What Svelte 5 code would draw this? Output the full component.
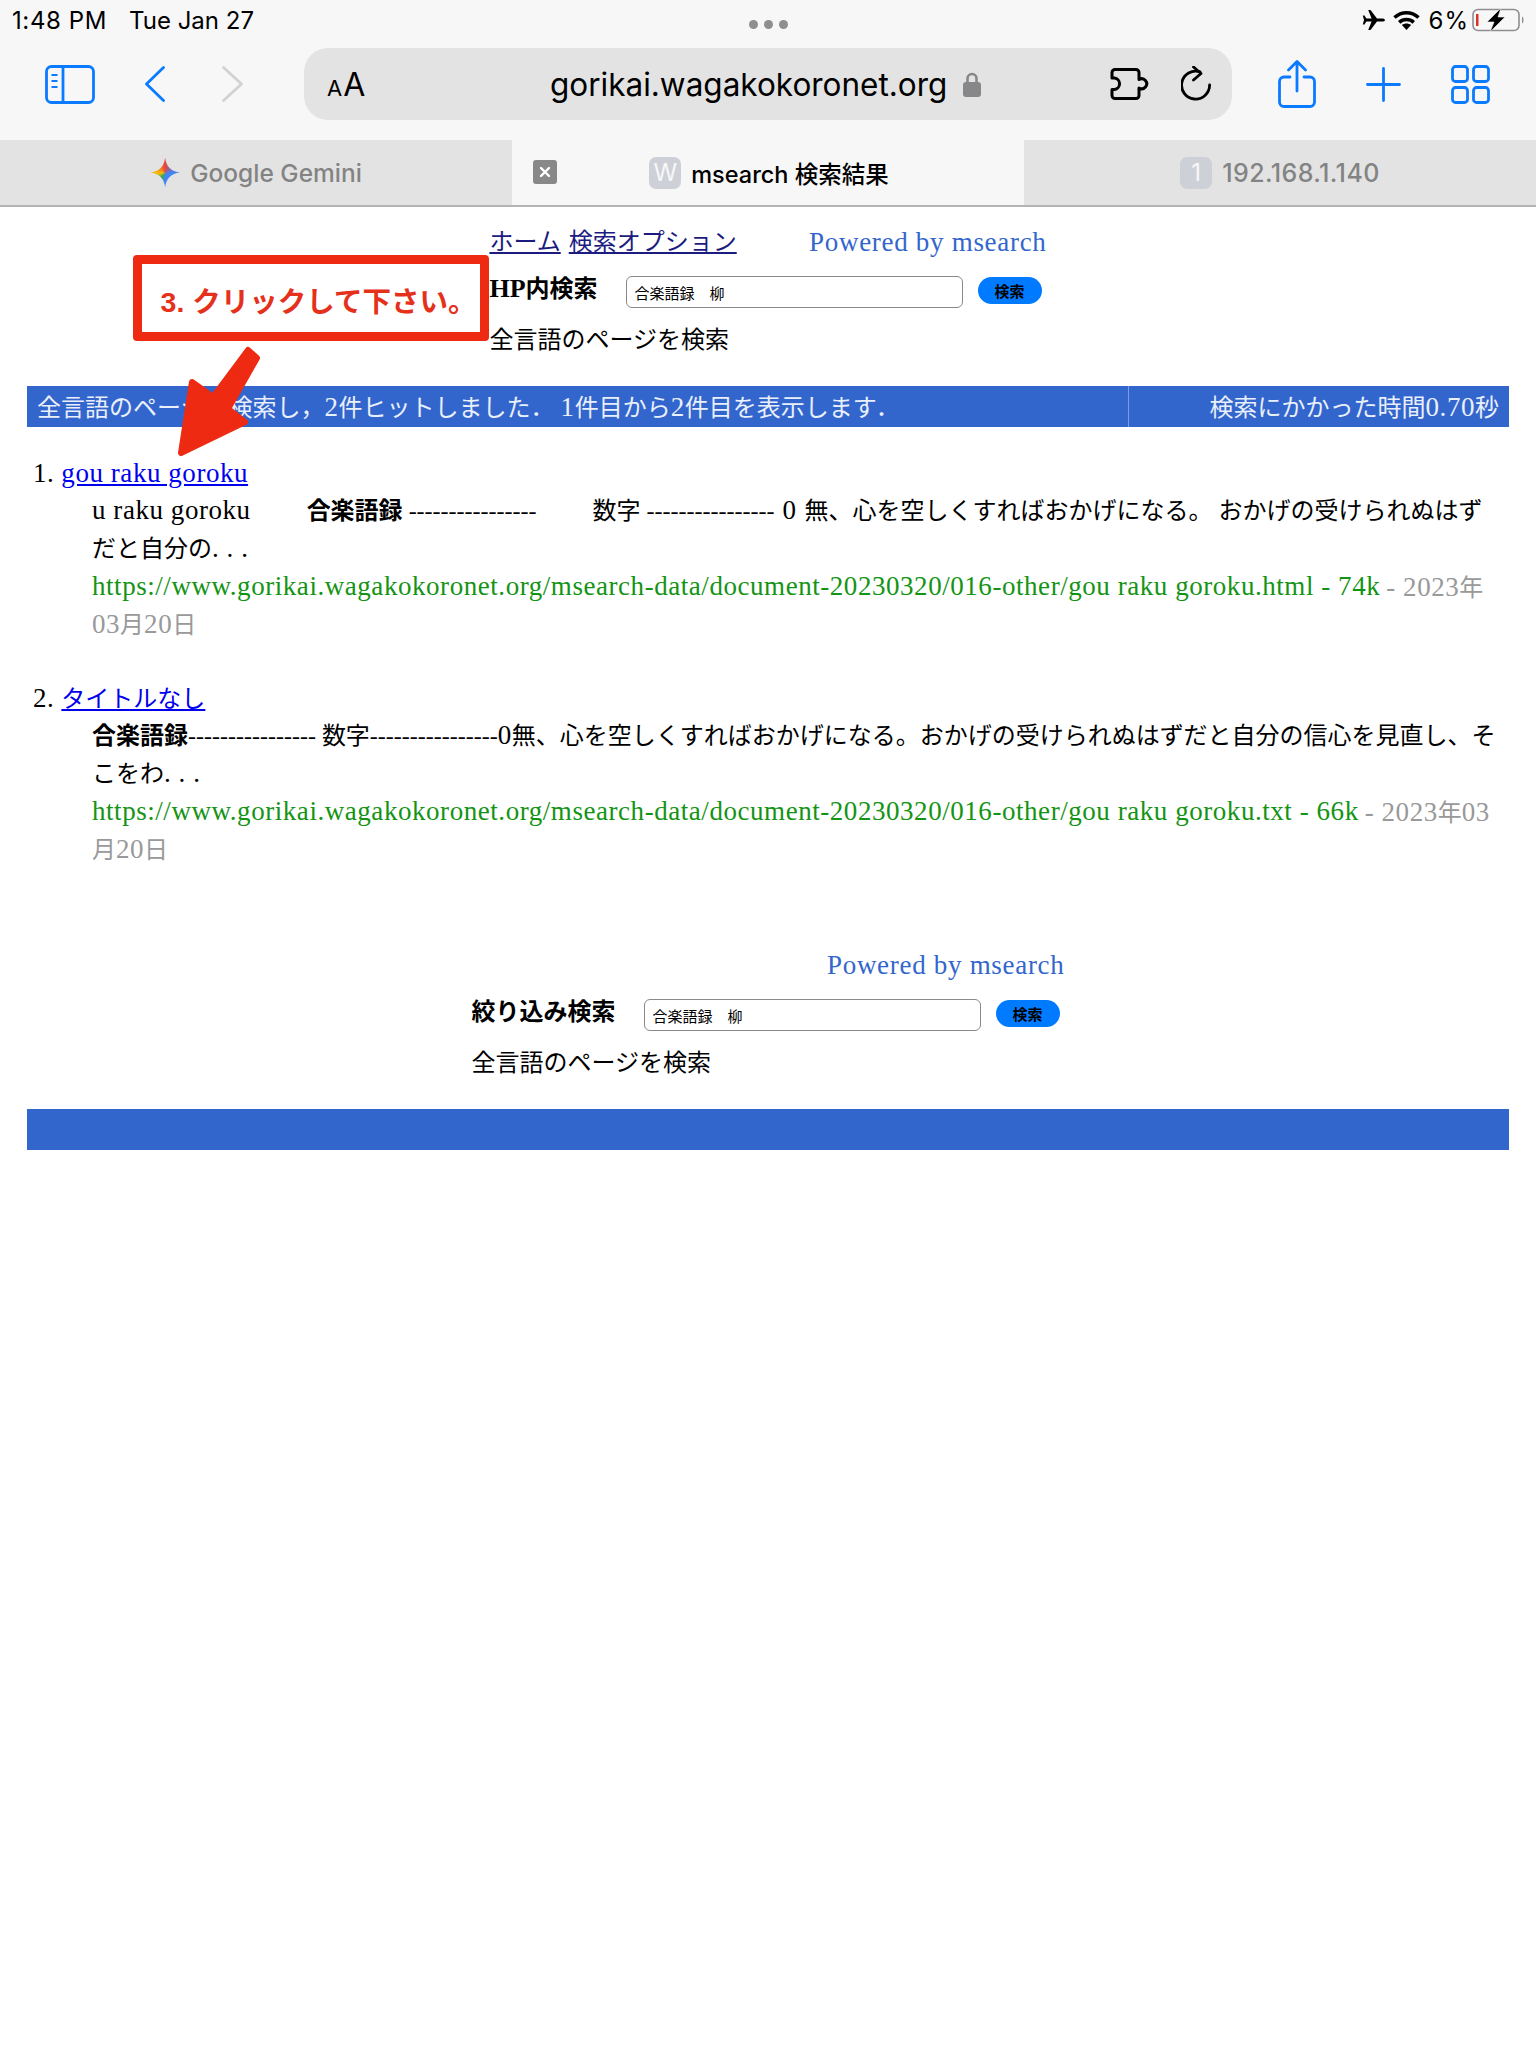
<script>
	const query = '合楽語録　柳';
</script>

{#snippet searchForm(label, homeLinks)}
	<form class="search">
		<div class="searchTop" class:right={!homeLinks}>
			{#if homeLinks}
				<span class="navLinks"><a href="#home">ホーム</a> <a href="#opt">検索オプション</a></span>
			{/if}
			<span class="powered">Powered by msearch</span>
		</div>
		<div class="searchRow">
			<b>{@html label}</b>
			<input type="text" value={query} />
			<button type="button">検索</button>
		</div>
		<div class="scope">全言語のページを検索</div>
	</form>
{/snippet}

<div class="chrome">
	<div class="status">
		<div class="statusLeft"><span class="time">1:48 PM</span><span>Tue Jan 27</span></div>
		<div class="dots"><i></i><i></i><i></i></div>
		<div class="statusRight">
			<svg width="23" height="20" viewBox="0 0 23 20"><path fill="#000" d="M23 10c0-1-1.5-1.6-3-1.6h-5L8.5 0H6.2l3.4 8.4H4.4L2.4 5.6H.8L2 10 .8 14.4h1.6l2-2.8h5.2L6.2 20h2.300l6.500-8.400h5c1.500 0 3-.6 3-1.600z"/></svg>
			<svg width="27" height="20" viewBox="0 0 27 20" fill="none" stroke="#000" stroke-width="3.600"><path d="M1.500 7.500c7-6.400 17-6.400 24 0"/><path d="M6.200 12.300c4.300-3.800 10.300-3.800 14.600 0"/><path fill="#000" stroke="none" d="M13.500 20l-4.600-5c2.700-2 6.500-2 9.200 0z"/></svg>
			<span class="pct">6%</span>
			<svg width="53" height="24" viewBox="0 0 53 24">
				<rect x="1" y="1.500" width="46" height="21" rx="5" fill="none" stroke="#8e8e8e" stroke-width="1.600"/>
				<rect x="4" y="6" width="2.500" height="12" fill="#d9342b"/>
				<path d="M50 8.500c2 .5 2 6.500 0 7z" fill="#8e8e8e"/>
				<path d="M29 0L15 14h7l-4 10 15-15h-7z" fill="#000" stroke="#f7f7f7" stroke-width=".6"/>
			</svg>
		</div>
	</div>

	<div class="toolbar">
		<svg class="blue" width="50" height="39" viewBox="0 0 50 39" fill="none" stroke="#0a7aff" stroke-width="2.800">
			<rect x="1.500" y="1.500" width="47" height="36" rx="5"/>
			<path d="M18 1.500v36"/>
			<path d="M6.500 10h6M6.500 16h6M6.500 22h6" stroke-width="2.200"/>
		</svg>
		<svg class="back" width="20" height="36" viewBox="0 0 20 36" fill="none" stroke="#0a7aff" stroke-width="2.800" stroke-linecap="round" stroke-linejoin="round"><path d="M18.500 1.500L1.500 18l17 16.500"/></svg>
		<svg class="fwd" width="21" height="36" viewBox="0 0 21 36" fill="none" stroke="#d2d2d4" stroke-width="2.800" stroke-linecap="round" stroke-linejoin="round"><path d="M1.500 1.500L19.500 18l-18 16.500"/></svg>

		<div class="pill">
			<span class="aa"><small>A</small>A</span>
			<span class="url">gorikai.wagakokoronet.org</span>
			<svg class="lock" width="18" height="25" viewBox="0 0 18 25"><path fill="none" stroke="#87878a" stroke-width="2.600" d="M4.500 11V6.500a4.500 4.500 0 0 1 9 0V11"/><rect y="10" width="18" height="15" rx="3" fill="#87878a"/></svg>
			<svg class="puzzle" width="42" height="32" viewBox="0 0 42 32" fill="none" stroke="#000" stroke-width="3" stroke-linejoin="round">
				<path d="M5 1.500h21a3 3 0 0 1 3 3V11.500a5 5 0 1 1 0 8.500V27.500a3 3 0 0 1-3 3H5a3 3 0 0 1-3-3V21.500h2.500a5.800 5.800 0 0 0 0-11.500H2V4.500a3 3 0 0 1 3-3z"/>
			</svg>
			<svg class="reload" width="30" height="36" viewBox="0 0 30 36" fill="none" stroke="#000" stroke-width="2.800" stroke-linecap="round" stroke-linejoin="round">
				<path d="M19 5.800A14 14 0 1 0 28.600 19"/>
				<path d="M12.500 1l7.500 6.500-7.500 6.500"/>
			</svg>
		</div>

		<svg class="share" width="38" height="48" viewBox="0 0 38 48" fill="none" stroke="#0a7aff" stroke-width="2.800" stroke-linecap="round" stroke-linejoin="round">
			<path d="M12 17H6a4.500 4.500 0 0 0-4.500 4.500V42A4.500 4.500 0 0 0 6 46.500h26a4.500 4.500 0 0 0 4.500-4.500V21.500A4.500 4.500 0 0 0 32 17h-6"/>
			<path d="M19 31V2M10.500 10L19 1.500 27.500 10"/>
		</svg>
		<svg class="plus" width="35" height="35" viewBox="0 0 35 35" fill="none" stroke="#0a7aff" stroke-width="2.800" stroke-linecap="round"><path d="M17.500 1.500v32M1.500 17.500h32"/></svg>
		<svg class="grid" width="39" height="39" viewBox="0 0 39 39" fill="none" stroke="#0a7aff" stroke-width="2.800">
			<rect x="1.500" y="1.500" width="15" height="15" rx="3"/><rect x="22.500" y="1.500" width="15" height="15" rx="3"/>
			<rect x="1.500" y="22.500" width="15" height="15" rx="3"/><rect x="22.500" y="22.500" width="15" height="15" rx="3"/>
		</svg>
	</div>

	<div class="tabs">
		<div class="tab"><span class="gem"></span>Google Gemini</div>
		<div class="tab active">
			<span class="close">
				<svg width="14" height="14" viewBox="0 0 14 14" stroke="#fff" stroke-width="2.400" stroke-linecap="round"><path d="M3 3l8 8M11 3l-8 8"/></svg>
			</span>
			<span class="fav">W</span>msearch 検索結果
		</div>
		<div class="tab ip"><span class="fav">1</span>192.168.1.140</div>
	</div>
</div>

<div class="page">
	{@render searchForm('<span class="hp">HP</span>内検索', true)}

	<div class="bar">
		<div class="barMain">全言語のページを検索し，<span class="lat">2</span>件ヒットしました． <span class="lat">1</span>件目から<span class="lat">2</span>件目を表示します．</div>
		<div class="barTime">検索にかかった時間<span class="lat">0.70</span>秒</div>
	</div>

	<dl class="results">
		<dt><span class="lat">1.</span> <a href="#r1" class="lat">gou raku goroku</a></dt>
		<dd>
			<span class="line"><span class="lat gapR">u raku goroku</span>　　<b>合楽語録</b> ---------------- <span class="gapL">　　数字</span> ---------------- <span class="lat gapL">0</span> <span class="gapL">無、心を空しくすればおかげになる。 おかげの受けられぬはず</span></span>
			<span class="line">だと自分の<span class="lat">. . .</span></span>
			<span class="line"><span class="url2 lat">https://www.gorikai.wagakokoronet.org/msearch-data/document-20230320/016-other/gou raku goroku.html - 74k</span> <span class="date"><span class="lat">- 2023</span>年</span></span>
			<span class="line date"><span class="lat">03</span>月<span class="lat">20</span>日</span>
		</dd>
		<dt><span class="lat">2.</span> <a href="#r2">タイトルなし</a></dt>
		<dd>
			<span class="line"><b>合楽語録</b>---------------- 数字----------------<span class="lat">0</span>無、心を空しくすればおかげになる。おかげの受けられぬはずだと自分の信心を見直し、そ</span>
			<span class="line">こをわ<span class="lat">. . .</span></span>
			<span class="line"><span class="url2 lat">https://www.gorikai.wagakokoronet.org/msearch-data/document-20230320/016-other/gou raku goroku.txt - 66k</span> <span class="date"><span class="lat">- 2023</span>年<span class="lat">03</span></span></span>
			<span class="line date">月<span class="lat">20</span>日</span>
		</dd>
	</dl>

	{@render searchForm('絞り込み検索', false)}

	<div class="bar footBar"></div>
</div>

<div class="note">3. クリックして下さい。</div>
<svg class="arrow" width="100" height="125" viewBox="170 340 100 125">
	<path fill="#ee2a12" stroke="#ee2a12" stroke-width="6" stroke-linejoin="round" d="M248 350L257 358 228 409 245 422 181 453 192 382 213 397z"/>
</svg>

<style>
	:global(body) {
		background: #fff;
		font-family: "Liberation Serif", "Noto Sans CJK JP", serif;
		font-size: 24px;
		color: #000;
	}
	:global(.lat) {
		font-size: 27px;
		letter-spacing: .55px;
	}
	:global(.hp) {
		font-size: 26px;
	}
	.chrome {
		background: #f7f7f7;
		font-family: Inter, "Noto Sans CJK JP", sans-serif;
	}
	.status {
		height: 48px;
		display: grid;
		grid-template-columns: 1fr auto 1fr;
		padding: 0 11px 0 12px;
		font-size: 24px;
	}
	.statusLeft {
		display: flex;
		gap: 22px;
		height: 40px;
		align-items: center;
	}
	.time {
		letter-spacing: .6px;
	}
	.dots {
		display: flex;
		gap: 6px;
		padding-top: 20px;
	}
	.dots i {
		width: 9px;
		height: 9px;
		border-radius: 50%;
		background: #8e8e8e;
	}
	.statusRight {
		display: flex;
		justify-content: flex-end;
		align-items: center;
		gap: 8px;
		height: 40px;
	}
	.pct {
		font-size: 24px;
		letter-spacing: 1px;
		margin-left: 1px;
	}
	.statusRight svg:last-child {
		margin-left: -5px;
	}
	.toolbar {
		display: flex;
		align-items: center;
		height: 72px;
		padding-left: 45px;
		margin-bottom: 20px;
	}
	.back { margin-left: 50px; }
	.fwd { margin-left: 57px; }
	.pill {
		width: 928px;
		height: 72px;
		margin-left: 61px;
		background: #e3e3e3;
		border-radius: 24px;
		display: flex;
		align-items: center;
		padding-left: 23px;
		box-sizing: border-box;
	}
	.aa {
		font-size: 32px;
		width: 223px;
	}
	.aa small {
		font-size: 22px;
		margin-right: 1px;
	}
	.url {
		font-size: 31.5px;
		white-space: nowrap;
		width: 413px;
	}
	.puzzle { margin-left: 129px; }
	.reload { margin-left: 29px; }
	.share { margin-left: 46px; }
	.plus { margin-left: 50px; }
	.grid { margin-left: 50px; }

	.tabs {
		display: grid;
		grid-template-columns: repeat(3, 512px);
		height: 67px;
		border-bottom: 2px solid #b4b4b4;
		box-sizing: border-box;
	}
	.tab {
		position: relative;
		display: flex;
		align-items: center;
		justify-content: center;
		background: #e3e3e3;
		color: #838383;
		font-size: 24.5px;
		font-weight: 500;
		gap: 10px;
	}
	.tab.active {
		background: #f7f7f7;
		color: #000;
		font-size: 23.5px;
		padding-left: 2px;
	}
	.tab.ip {
		font-size: 25px;
		letter-spacing: .4px;
	}
	.gem {
		width: 30px;
		height: 30px;
		background: conic-gradient(#e8453c, #4285f4 25%, #4285f4 50%, #34a853 60%, #fbbc05 75%, #e8453c);
		clip-path: path("M15 0C16 9 21 14 30 15C21 16 16 21 15 30C14 21 9 16 0 15C9 14 14 9 15 0z");
	}
	.fav {
		width: 32px;
		height: 32px;
		border-radius: 7px;
		background: #ced0d8;
		color: #f7f7f7;
		font-weight: 400;
		font-size: 24px;
		display: flex;
		align-items: center;
		justify-content: center;
	}
	.close {
		position: absolute;
		left: 21px;
		top: 20px;
		width: 24px;
		height: 24px;
		border-radius: 3px;
		background: #888;
		display: flex;
		align-items: center;
		justify-content: center;
	}

	.page {
		padding: 16px 27px 0;
	}
	.search {
		width: fit-content;
		margin: 0 auto;
	}
	.searchTop {
		height: 38px;
		line-height: 38px;
		display: flex;
		justify-content: space-between;
		white-space: nowrap;
	}
	.searchTop.right {
		justify-content: flex-end;
	}
	.navLinks a {
		color: #1c1c80;
	}
	.navLinks a + a {
		margin-left: 2px;
	}
	.powered {
		color: #3366cc;
		font-size: 27px;
		letter-spacing: .7px;
	}
	.searchRow {
		display: flex;
		align-items: center;
		height: 38px;
		margin-top: 9px;
		margin-right: 5px;
	}
	.searchRow b {
		margin-right: 28px;
		margin-top: -5px;
	}
	.searchRow input {
		width: 337px;
		height: 32px;
		box-sizing: border-box;
		border: 1.5px solid #8a8a8a;
		border-radius: 6px;
		padding: 0 8px;
		font: 15px "Noto Sans CJK JP", sans-serif;
		color: #000;
		background: #fff;
		margin: 6px 15px 0 0;
	}
	.searchRow button {
		width: 64px;
		height: 27px;
		border: 0;
		border-radius: 14px;
		background: #007aff;
		color: #000;
		font: 700 15px "Noto Sans CJK JP", sans-serif;
		padding: 0;
		margin-top: 3px;
	}
	.scope {
		height: 38px;
		line-height: 38px;
		margin-top: 13px;
	}
	.bar {
		display: flex;
		height: 41px;
		margin-top: 27px;
		background: #3366cc;
		color: #e9effb;
		line-height: 43px;
		white-space: nowrap;
	}
	.barMain {
		width: 1091px;
		padding-left: 10px;
		border-right: 1px solid #7c9cdd;
	}
	.barTime {
		flex: 1;
		text-align: right;
		padding-right: 10px;
	}
	.results {
		margin: 27px 0 0;
		padding-left: 6px;
	}
	dt {
		height: 37px;
		line-height: 38px;
	}
	dt a {
		color: #0000ee;
		margin-left: 1px;
	}
	dd {
		margin: 0 0 36px 59px;
	}
	.line {
		display: block;
		height: 38px;
		line-height: 38px;
		white-space: nowrap;
	}
	.gapR { margin-right: 8px; }
	.gapL { margin-left: 2px; }
	.url2 {
		color: #149414;
		vertical-align: 1px;
	}
	.date {
		color: #999;
	}
	.results + :global(.search) {
		margin-top: 78px;
	}

	.note {
		position: absolute;
		left: 133px;
		top: 255px;
		width: 356px;
		height: 86px;
		box-sizing: border-box;
		border: 9px solid #ee2a12;
		border-radius: 4px;
		background: #fff;
		color: #e5311b;
		font: 700 28.5px/76px "Liberation Sans", "Noto Sans CJK JP", sans-serif;
		text-align: center;
		padding-left: 15px;
		white-space: nowrap;
	}
	.arrow {
		position: absolute;
		left: 170px;
		top: 340px;
	}
</style>
